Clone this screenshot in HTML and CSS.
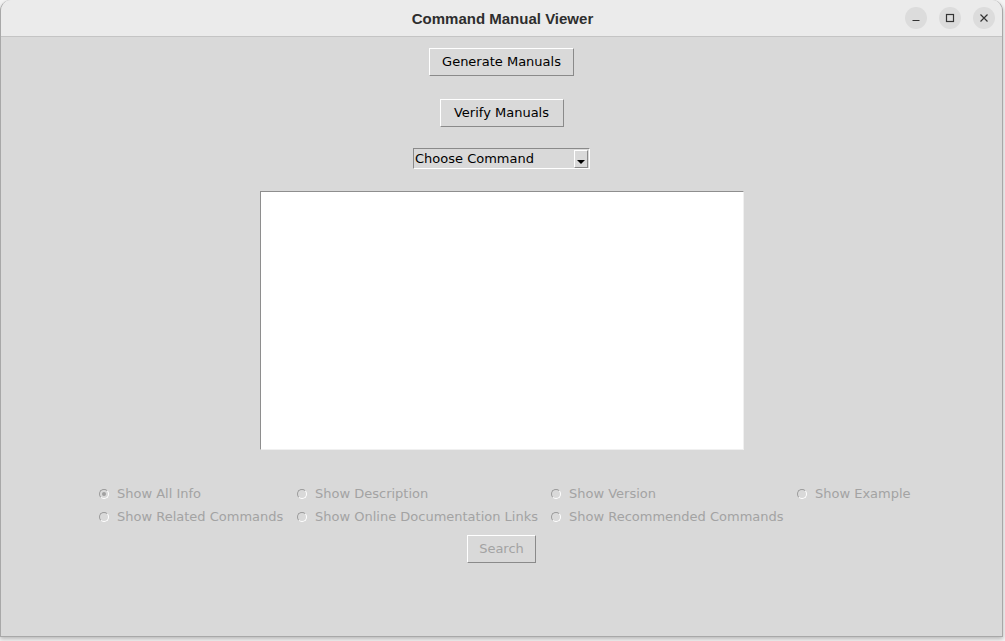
FILE: index.html
```html
<!DOCTYPE html>
<html>
<head>
<meta charset="utf-8">
<link rel="stylesheet" href="styles.css">
</head>
<body>
<div class="window">
  <div class="titlebar">
    <div class="title">Command Manual Viewer</div>
    <div class="controls">
      <span class="ctl"><svg width="10" height="10" viewBox="0 0 10 10"><path d="M1.5 7.5h7" stroke="#333" stroke-width="1.2"/></svg></span>
      <span class="ctl"><svg width="10" height="10" viewBox="0 0 10 10"><rect x="1.5" y="1.5" width="7" height="7" fill="none" stroke="#333" stroke-width="1.2"/></svg></span>
      <span class="ctl"><svg width="10" height="10" viewBox="0 0 10 10"><path d="M1.5 1.5l7 7M8.5 1.5l-7 7" stroke="#333" stroke-width="1.2"/></svg></span>
    </div>
  </div>
  <div class="content">
    <div class="btn btn-gen">Generate Manuals</div>
    <div class="btn btn-verify">Verify Manuals</div>
    <div class="combo">
      <span class="combo-text">Choose Command</span>
      <span class="combo-arrow"><span class="tri"></span></span>
    </div>
    <div class="textbox"></div>
    <div class="options">
      <label class="opt"><span class="radio checked"></span>Show All Info</label>
      <label class="opt"><span class="radio"></span>Show Description</label>
      <label class="opt"><span class="radio"></span>Show Version</label>
      <label class="opt"><span class="radio"></span>Show Example</label>
      <label class="opt"><span class="radio"></span>Show Related Commands</label>
      <label class="opt"><span class="radio"></span>Show Online Documentation Links</label>
      <label class="opt"><span class="radio"></span>Show Recommended Commands</label>
    </div>
    <div class="btn btn-search">Search</div>
  </div>
</div>
</body>
</html>
```
FILE: styles.css
```css
html, body {
  margin: 0;
  padding: 0;
}
body {
  width: 1005px;
  height: 641px;
  background: #f4f4f4;
  font-family: "DejaVu Sans", sans-serif;
  overflow: hidden;
}
.window {
  width: 1001px;
  height: 636px;
  border: 1px solid #a8a8a8;
  border-top: none;
  border-radius: 11px 11px 0 0;
  background: #d9d9d9;
  overflow: hidden;
  box-shadow: 0 2px 4px rgba(0,0,0,0.25);
  display: flex;
  flex-direction: column;
}
.titlebar {
  height: 36px;
  flex: none;
  background: #ebebeb;
  border-bottom: 1px solid #c4c4c4;
  display: flex;
  align-items: center;
  justify-content: center;
  position: relative;
}
.title {
  font-family: "Liberation Sans", sans-serif;
  font-weight: bold;
  font-size: 15px;
  color: #2e2e2e;
  margin-top: 0;
  margin-left: 2px;
}
.controls {
  position: absolute;
  right: 7px;
  top: 7px;
  display: flex;
  gap: 12px;
}
.ctl {
  width: 22px;
  height: 22px;
  border-radius: 50%;
  background: #dcdcdc;
  display: flex;
  align-items: center;
  justify-content: center;
}
.content {
  flex: 1;
  display: flex;
  flex-direction: column;
  align-items: center;
}
.btn {
  font-size: 13px;
  color: #000;
  height: 26px;
  line-height: 26px;
  border: 1px solid;
  border-color: #ffffff #8a8a8a #8a8a8a #ffffff;
  background: #d9d9d9;
  text-align: center;
  box-sizing: content-box;
}
.btn-gen {
  margin-top: 11px;
  width: 143px;
}
.btn-verify {
  margin-top: 23px;
  width: 122px;
}
.combo {
  margin-top: 21px;
  width: 175px;
  height: 19px;
  border: 1px solid;
  border-color: #8a8a8a #ffffff #ffffff #8a8a8a;
  display: flex;
  align-items: center;
}
.combo-text {
  flex: 1;
  font-size: 13px;
  padding-left: 1px;
  line-height: 19px;
}
.combo-arrow {
  width: 12px;
  height: 16px;
  border: 1px solid;
  border-color: #ffffff #8a8a8a #8a8a8a #ffffff;
  margin-right: 1px;
  margin-top: 1px;
  display: flex;
  align-items: flex-end;
  justify-content: center;
}
.tri {
  width: 0;
  height: 0;
  border-left: 4px solid transparent;
  border-right: 4px solid transparent;
  border-top: 4px solid #000;
  margin-bottom: 3px;
}
.textbox {
  margin-top: 22px;
  width: 482px;
  height: 257px;
  background: #ffffff;
  border: 1px solid;
  border-color: #8e8e8e #f0f0f0 #f0f0f0 #8e8e8e;
}
.options {
  margin-top: 32px;
  align-self: flex-start;
  margin-left: 97px;
  display: grid;
  grid-template-columns: 198px 254px 246px 118px;
  grid-auto-rows: 23px;
}
.opt {
  display: flex;
  align-items: center;
  font-size: 13px;
  color: #a3a3a3;
  white-space: nowrap;
}
.radio {
  width: 8px;
  height: 8px;
  border-radius: 50%;
  border: 1px solid;
  border-color: #9a9a9a #ffffff #ffffff #9a9a9a;
  background: #d9d9d9;
  margin-left: 1px;
  margin-right: 8px;
  display: flex;
  align-items: center;
  justify-content: center;
}
.radio.checked::after {
  content: "";
  width: 4px;
  height: 4px;
  border-radius: 50%;
  background: #a0a0a0;
}
.btn-search {
  margin-top: 7px;
  width: 67px;
  color: #a3a3a3;
}
```
